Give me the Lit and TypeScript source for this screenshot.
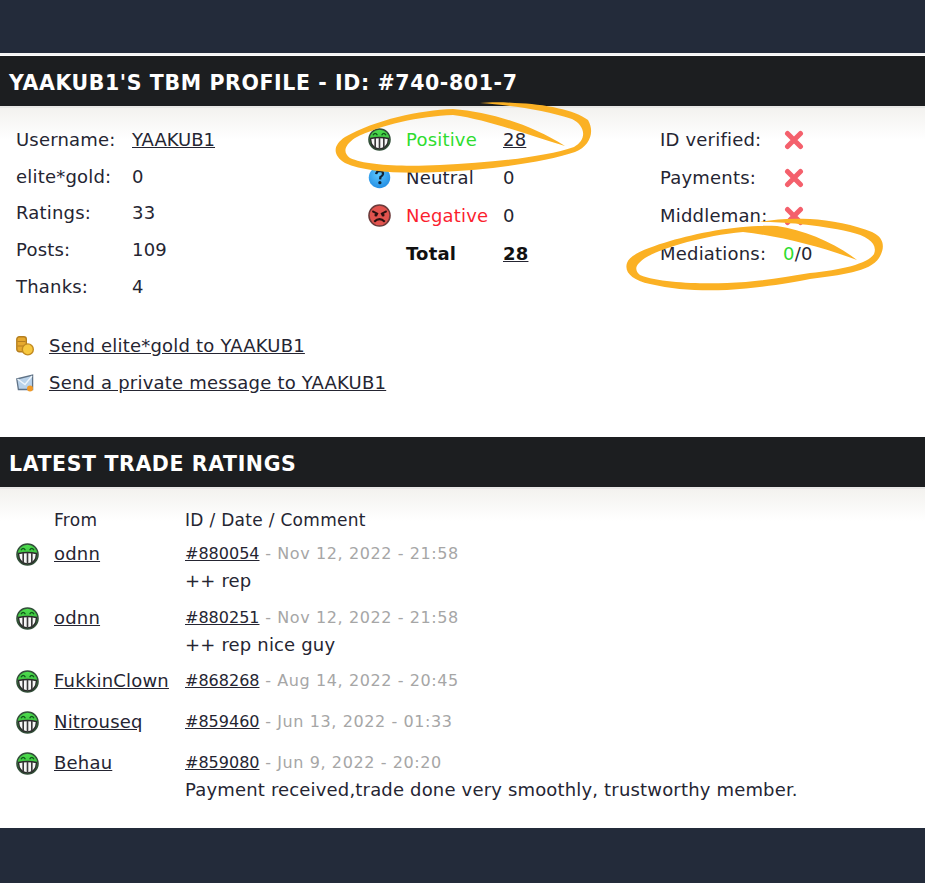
import { LitElement, html, css, svg } from "lit";
import { customElement } from "lit/decorators.js";

const grin = () => html`<svg class="ico" viewBox="0 0 24 24" aria-hidden="true">
  <defs><linearGradient id="gg" x1="0" y1="0" x2="0" y2="1"><stop offset="0" stop-color="#4fe04f"/><stop offset="1" stop-color="#2aa52f"/></linearGradient></defs>
  <circle cx="12" cy="12" r="11" fill="url(#gg)" stroke="#33503a" stroke-width="1.6"/>
  <path d="M2.6 11 Q12 9 21.4 11 L20.6 16 Q18 21.8 12 21.8 Q6 21.8 3.4 16 Z" fill="#f6f6f6" stroke="#2b2b2b" stroke-width="1.5"/>
  <path d="M7.5 10.5V20.2M12 10V21.5M16.5 10.5V20.2" stroke="#3a3a3a" stroke-width="1.7" fill="none"/>
  <path d="M5.2 7.6 Q7.5 3.6 9.8 7.6M14.2 7.6 Q16.5 3.6 18.8 7.6" stroke="#0f5a1a" stroke-width="1.4" fill="none"/>
</svg>`;

const neutral = () => html`<svg class="ico" viewBox="0 0 24 24" aria-hidden="true">
  <defs><radialGradient id="nb" cx=".45" cy=".35" r=".75"><stop offset="0" stop-color="#5cc8ff"/><stop offset="1" stop-color="#1c86e0"/></radialGradient></defs>
  <circle cx="12" cy="12" r="11.2" fill="url(#nb)"/>
  <path d="M8.5 8.5 Q9 5 12.5 5 Q16 5.3 15.6 8.5 Q15.2 10.5 13 11.5 L12.6 14" stroke="#123" stroke-width="2.4" fill="none"/>
  <circle cx="12.4" cy="17.4" r="1.7" fill="#123"/>
</svg>`;

const negative = () => html`<svg class="ico" viewBox="0 0 24 24" aria-hidden="true">
  <circle cx="12" cy="12" r="11" fill="#e2534e" stroke="#6b3a3a" stroke-width="1.6"/>
  <path d="M4.5 7.5 L10.5 10.5M19.5 7.5 L13.5 10.5" stroke="#2a1010" stroke-width="2" fill="none"/>
  <circle cx="8.3" cy="11.4" r="1.6" fill="#2a1010"/><circle cx="15.7" cy="11.4" r="1.6" fill="#2a1010"/>
  <path d="M6.5 18.5 Q12 13 17.5 18.5" stroke="#2a1010" stroke-width="2.2" fill="none"/>
</svg>`;

const cross = () => html`<svg class="x" viewBox="0 0 20 20" aria-hidden="true">
  <path d="M3.5 3.5 L16.5 16.5M16.5 3.5 L3.5 16.5" stroke="#f4606c" stroke-width="5" stroke-linecap="round"/>
</svg>`;

const coins = () => html`<svg class="small" viewBox="0 0 18 20" aria-hidden="true">
  <rect x=".8" y=".8" width="9.5" height="15" rx="2.5" fill="#e6a92f" stroke="#b57f1f" stroke-width="1.4"/>
  <path d="M1.5 5.5h8M1.5 10h8" stroke="#b57f1f" stroke-width="1.2"/>
  <circle cx="11.8" cy="13.4" r="5.5" fill="#f7c83f" stroke="#c28a20" stroke-width="1.4"/>
</svg>`;

const mail = () => html`<svg class="small" viewBox="0 0 18 18" aria-hidden="true">
  <path d="M.8 5 L16.6 1 V15.5 H2.4 Z" fill="#b9d2ea" stroke="#5f7286" stroke-width="1.3"/>
  <path d="M1.5 5 L9 10.5 L16 2" fill="none" stroke="#eef5fb" stroke-width="1.3"/>
  <circle cx="14" cy="14.4" r="3" fill="#f09a28"/>
</svg>`;

const ring = (d: string) => svg`<path d=${d} fill="#fbb124"/>`;

const ratings = [
  { from: "odnn", id: "#880054", date: "Nov 12, 2022 - 21:58", text: "++ rep" },
  { from: "odnn", id: "#880251", date: "Nov 12, 2022 - 21:58", text: "++ rep nice guy" },
  { from: "FukkinClown", id: "#868268", date: "Aug 14, 2022 - 20:45", text: "" },
  { from: "Nitrouseq", id: "#859460", date: "Jun 13, 2022 - 01:33", text: "" },
  { from: "Behau", id: "#859080", date: "Jun 9, 2022 - 20:20", text: "Payment received,trade done very smoothly, trustworthy member." },
];

@customElement("app-root")
export class AppRoot extends LitElement {
  static styles = css`
    :host { display: block; font-family: "DejaVu Sans", Verdana, sans-serif; font-size: 18px; letter-spacing: .2px; color: #252532; }
    * { box-sizing: border-box; }
    a { color: inherit; text-decoration: underline; }
    .page { position: relative; height: 883px; background: #232b3a; display: flex; flex-direction: column; overflow: hidden; }
    .top { height: 53px; flex: none; }
    .card { background: #fff; border-top: 2px solid #f4f4f4; height: 775px; padding-top: 1px; flex: none; }
    .bar { height: 50px; background: #1c1e20; color: #fff; font-size: 20.5px; letter-spacing: .6px; font-weight: 700; display: flex; align-items: center; padding: 4px 0 0 9px; white-space: nowrap; }
    .body { background: linear-gradient(#f3f2ef, #fff 32px); border-top: 2px solid #e8e8e6; }
    .stats { display: grid; grid-template-columns: 352px 292px 1fr; padding: 12.5px 0 0 16px; height: 219px; }
    .col { display: grid; align-content: start; align-items: center; }
    .c1 { grid-template-columns: 116px 1fr; grid-auto-rows: 36.6px; padding-top: 1px; }
    .c2 { grid-template-columns: 38px 97px 1fr; grid-auto-rows: 38px; }
    .c3 { grid-template-columns: 123px 1fr; grid-auto-rows: 38px; }
    .flat { letter-spacing: 0; }
    .ico { width: 23px; height: 23px; display: block; }
    .x { width: 20px; height: 20px; display: block; margin-left: 1px; }
    .small { width: 18px; height: 20px; display: block; }
    .green { color: #2fdc2f; }
    .red { color: #fb1f2f; }
    b { color: #111; }
    .links { height: 110px; padding-left: 16px; display: grid; grid-auto-rows: 37px; align-content: start; }
    .links div { display: flex; align-items: center; gap: 15px; }
    .list { padding: 19px 0 0 16px; }
    .head { display: grid; grid-template-columns: 38px 131px 1fr; height: 23px; margin-bottom: 9px; align-items: center; font-size: 17px; letter-spacing: .3px; }
    .row { display: grid; grid-template-columns: 38px 131px 1fr; min-height: 41px; }
    .row.two { min-height: 63.5px; }
    .row > * { align-self: start; }
    .row .line { height: 27px; display: flex; align-items: center; }
    .id { font-size: 16px; letter-spacing: 0; }
    .muted { color: #a6a6a6; white-space: pre; font-size: 16px; letter-spacing: .6px; }
    .comment { letter-spacing: .17px; }
    .row .ico { margin-top: 3px; }
    .scribble { position: absolute; left: 0; top: 0; width: 925px; height: 883px; pointer-events: none; }
  `;

  render() {
    return html`<div class="page">
      <div class="top"></div>
      <div class="card">
        <div class="bar">YAAKUB1'S TBM PROFILE - ID: #740-801-7</div>
        <div class="body">
          <div class="stats">
            <div class="col c1">
              <span>Username:</span><a class="flat" href="#">YAAKUB1</a>
              <span>elite*gold:</span><span>0</span>
              <span>Ratings:</span><span>33</span>
              <span>Posts:</span><span>109</span>
              <span>Thanks:</span><span>4</span>
            </div>
            <div class="col c2">
              ${grin()}<span class="green">Positive</span><a href="#">28</a>
              ${neutral()}<span>Neutral</span><span>0</span>
              ${negative()}<span class="red">Negative</span><span>0</span>
              <span></span><b>Total</b><a href="#"><b>28</b></a>
            </div>
            <div class="col c3">
              <span>ID verified:</span>${cross()}
              <span>Payments:</span>${cross()}
              <span>Middleman:</span>${cross()}
              <span>Mediations:</span><span><span class="green">0</span>/0</span>
            </div>
          </div>
          <div class="links">
            <div>${coins()}<a href="#">Send elite*gold to YAAKUB1</a></div>
            <div>${mail()}<a href="#">Send a private message to YAAKUB1</a></div>
          </div>
        </div>
        <div class="bar">LATEST TRADE RATINGS</div>
        <div class="body">
          <div class="list">
            <div class="head"><span></span><span>From</span><span>ID / Date / Comment</span></div>
            ${ratings.map(
              (r) => html`<div class="row ${r.text ? "two" : ""}">
                ${grin()}
                <div class="line"><a href="#">${r.from}</a></div>
                <div>
                  <div class="line"><a class="id" href="#">${r.id}</a><span class="muted"> - ${r.date}</span></div>
                  ${r.text ? html`<div class="line comment">${r.text}</div>` : ""}
                </div>
              </div>`
            )}
          </div>
        </div>
      </div>
      <svg class="scribble" viewBox="0 0 925 883" aria-hidden="true">
        ${ring("M565 146 C530 124 490 112 453 109 C420 110 375 120 345 137 C333 145 332 155 345 163 C365 172 400 174 440 172 C490 170 545 162 575 152 C590 146 595 132 588 120 C575 110 545 104 515 103 C503 102 490 102 480 103 C510 105 545 110 572 119 C586 126 587 140 574 147 C545 157 490 163 440 165 C400 167 365 165 350 158 C342 152 345 145 355 138 C380 125 420 116 453 115 C490 120 530 136 565 146 Z")}
        ${ring("M857 260 C835 243 805 230 777 226 C745 224 700 232 670 241 C650 247 630 254 627 263 C624 272 632 280 650 284 C675 290 700 291 727 290 C760 288 790 283 810 279 C840 275 870 272 879 258 C885 248 885 238 872 232 C855 225 830 220 810 219 C790 218 775 219 760 222 C780 222 815 224 850 232 C868 236 878 244 874 254 C868 264 840 270 810 273 C780 278 755 282 727 283 C700 284 660 283 640 275 C634 270 635 265 645 258 C660 249 700 236 743 232 C780 236 825 248 857 260 Z")}
      </svg>
    </div>`;
  }
}
